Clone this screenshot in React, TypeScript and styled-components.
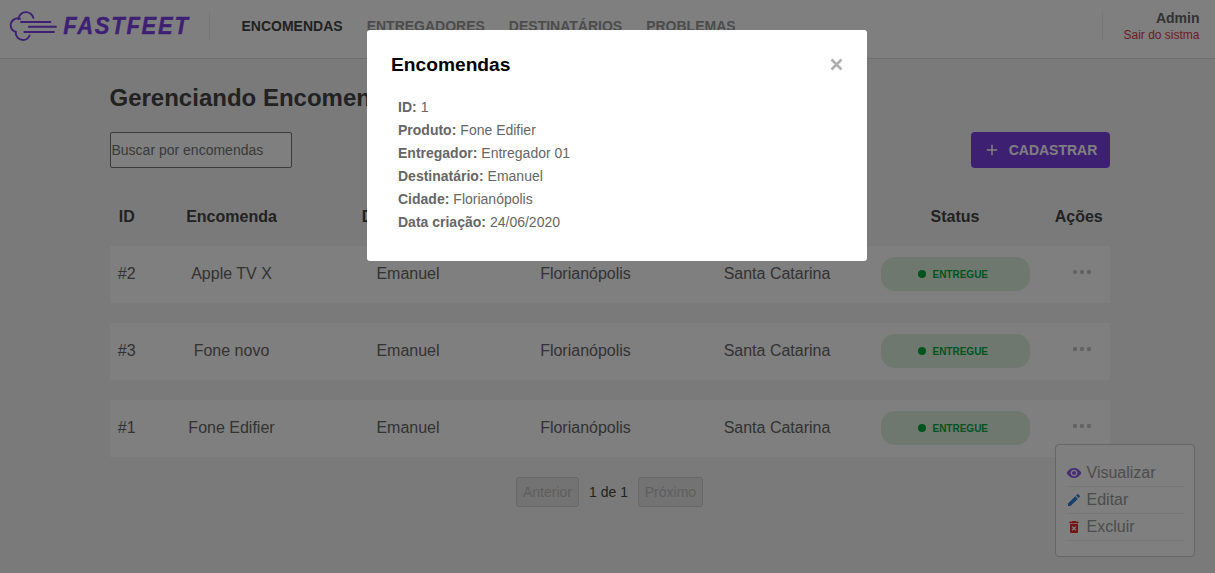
import React from 'react';
import styled, { createGlobalStyle } from 'styled-components';
import { MdAdd, MdVisibility, MdEdit, MdDeleteForever } from 'react-icons/md';

const GlobalStyle = createGlobalStyle`
  * { box-sizing: border-box; margin: 0; padding: 0; }
  html, body, #root { height: 100%; }
  body { background: #f5f5f5; overflow: hidden; }
  body, input, button { font-family: 'Liberation Sans', Arial, sans-serif; font-size: 14px; }
`;

const Page = styled.div`
  height: 573px;
  background: #f5f5f5;
`;

const Header = styled.header`
  height: 59px;
  display: flex;
  align-items: flex-start;
  background: #fff;
  border-bottom: 1px solid #ddd;
  padding: 11px 15.5px 0 9px;
`;

const LogoArea = styled.div`
  width: 201px;
  height: 30px;
  display: flex;
  border-right: 1px solid #eee;
`;

const Nav = styled.nav`
  display: flex;
  gap: 24px;
  height: 30px;
  padding-left: 31.5px;
  align-items: center;
  flex: 1;
`;

const NavLink = styled.a<{ $active?: boolean }>`
  font-size: 14px;
  font-weight: bold;
  line-height: 16px;
  text-transform: uppercase;
  color: ${(p) => (p.$active ? '#444' : '#999')};
`;

const Profile = styled.div`
  height: 30px;
  padding-left: 20px;
  border-left: 1px solid #eee;
  display: flex;
  flex-direction: column;
  align-items: flex-end;
`;

const UserName = styled.strong`
  font-size: 14px;
  line-height: 16px;
  margin-top: -1px;
  color: #666;
`;

const SignOut = styled.a`
  font-size: 12px;
  line-height: 14px;
  margin-top: 2px;
  color: #de3b3b;
`;

const Main = styled.main`
  width: 1000px;
  margin-left: 109.5px;
`;

const Title = styled.h1`
  padding-top: 25px;
  font-size: 24px;
  line-height: 28px;
  color: #444;
`;

const Toolbar = styled.div`
  display: flex;
  justify-content: space-between;
  margin-top: 20px;
`;

const Search = styled.input`
  width: 182px;
  height: 36px;
  border: 1px solid #767676;
  border-radius: 2px;
  padding: 1px;
  background: #fff;
  &::placeholder { color: #757575; }
`;

const AddButton = styled.button`
  width: 139px;
  height: 36px;
  display: flex;
  align-items: center;
  justify-content: center;
  gap: 8px;
  border: 0;
  border-radius: 4px;
  background: #7d40e7;
  color: #fff;
  font-weight: bold;
`;

const columns = '34.5px 175px 178px 177px 206px 150px 79.5px';

const HeadRow = styled.div`
  display: grid;
  grid-template-columns: ${columns};
  align-items: center;
  height: 18px;
  margin: 40px 0 20px;
  text-align: center;
  font-size: 16px;
  font-weight: bold;
  color: #444;
`;

const Row = styled.div`
  display: grid;
  grid-template-columns: ${columns};
  align-items: center;
  height: 57px;
  margin-bottom: 20px;
  padding-bottom: 2px;
  text-align: center;
  font-size: 16px;
  color: #666;
  background: #fff;
`;

const ActionsHead = styled.span`
  padding-left: 18px;
`;

const Status = styled.div`
  width: 149px;
  height: 34px;
  margin: 1px auto 0;
  border-radius: 14px;
  display: flex;
  align-items: center;
  justify-content: center;
  gap: 6px;
  padding-right: 4px;
  background: #dff0df;
  color: #00aa3c;
  font-size: 10px;
  font-weight: bold;
`;

const Dot = styled.i`
  width: 8.5px;
  height: 8.5px;
  border-radius: 50%;
  background: currentColor;
`;

const Actions = styled.div`
  display: flex;
  justify-content: center;
  padding-left: 24px;
  padding-bottom: 4px;
  color: #c6c6c6;
`;

const Pagination = styled.div`
  display: flex;
  align-items: center;
  margin-left: 406.5px;
  gap: 10px;
  font-size: 14px;
  color: #444;
`;

const PageButton = styled.button<{ $width: number }>`
  width: ${(p) => p.$width}px;
  height: 30px;
  border: 1px solid #cecece;
  border-radius: 3px;
  background: #e6e6e6;
  color: #bdbdbd;
`;

const Menu = styled.div`
  position: absolute;
  left: 1055px;
  top: 444px;
  width: 140px;
  height: 113px;
  padding: 15px 10px;
  background: #fff;
  border: 1px solid #ccc;
  border-radius: 4px;
`;

const MenuItem = styled.div<{ $icon: string }>`
  display: flex;
  align-items: center;
  gap: 4.5px;
  height: 27px;
  border-bottom: 1px solid #eee;
  font-size: 16px;
  color: #999;
  svg { color: ${(p) => p.$icon}; }
`;

const Overlay = styled.div`
  position: fixed;
  inset: 0;
  background: rgba(0, 0, 0, 0.5);
  display: flex;
  align-items: flex-start;
  padding: 30px 0 0 367px;
`;

const Dialog = styled.section`
  width: 500px;
  height: 231px;
  padding: 24px;
  border-radius: 3px;
  background: #fff;
`;

const DialogHeader = styled.div`
  display: flex;
  justify-content: space-between;
  align-items: flex-start;
  height: 22px;
`;

const DialogTitle = styled.h2`
  font-size: 19.2px;
  line-height: 22px;
  color: #000;
`;

const CloseIcon = styled.svg`
  margin-top: 4px;
  stroke: #b0b0b0;
  stroke-width: 2.7;
`;

const Details = styled.dl`
  padding: 20px 7px 0;
`;

const Detail = styled.div`
  display: flex;
  gap: 4px;
  height: 23px;
  line-height: 23px;
  font-size: 14px;
  color: #666;
  dt { font-weight: bold; }
`;

const Logo = () => (
  <svg width="184" height="32" viewBox="0 0 184 32">
    <g fill="none" stroke="#7d40e7" strokeWidth="1.9" strokeLinecap="round">
      <path d="M24.3 6.9A7.5 7.5 0 0 0 9.5 8.2" />
      <path d="M11 7.7A7 7 0 0 0 1.7 14.3A7 7 0 0 0 6.8 20.9" />
      <path d="M6.7 21A7.3 7.3 0 0 0 13.9 29A7.3 7.3 0 0 0 20.6 24.5" />
      <path d="M12 11h29.500M19.800 15.800H47M15.300 21H45" />
    </g>
    <text
      transform="translate(54.2 23) scale(.93 1)"
      textLength="134"
      fill="#7d40e7"
      stroke="#7d40e7"
      strokeWidth=".4"
      fontFamily="Liberation Sans"
      fontSize="23.6"
      fontWeight="bold"
      fontStyle="italic"
    >
      FASTFEET
    </text>
  </svg>
);

const MoreIcon = () => (
  <svg width="20" height="6" viewBox="0 0 20 6" fill="currentColor">
    <circle cx="3" cy="3" r="2.2" />
    <circle cx="10" cy="3" r="2.2" />
    <circle cx="17" cy="3" r="2.2" />
  </svg>
);

const orders = [
  { id: 2, product: 'Apple TV X' },
  { id: 3, product: 'Fone novo' },
  { id: 1, product: 'Fone Edifier' },
];

const details = [
  ['ID:', '1'],
  ['Produto:', 'Fone Edifier'],
  ['Entregador:', 'Entregador 01'],
  ['Destinatário:', 'Emanuel'],
  ['Cidade:', 'Florianópolis'],
  ['Data criação:', '24/06/2020'],
];

export default function App() {
  return (
    <Page>
      <GlobalStyle />
      <Header>
        <LogoArea><Logo /></LogoArea>
        <Nav>
          <NavLink $active>Encomendas</NavLink>
          <NavLink>Entregadores</NavLink>
          <NavLink>Destinatários</NavLink>
          <NavLink>Problemas</NavLink>
        </Nav>
        <Profile>
          <UserName>Admin</UserName>
          <SignOut>Sair do sistma</SignOut>
        </Profile>
      </Header>
      <Main>
        <Title>Gerenciando Encomendas</Title>
        <Toolbar>
          <Search placeholder="Buscar por encomendas" />
          <AddButton><MdAdd size={18} />CADASTRAR</AddButton>
        </Toolbar>
        <HeadRow>
          <span>ID</span>
          <span>Encomenda</span>
          <span>Destinatário</span>
          <span>Cidade</span>
          <span>Estado</span>
          <span>Status</span>
          <ActionsHead>Ações</ActionsHead>
        </HeadRow>
        {orders.map((o) => (
          <Row key={o.id}>
            <span>#{o.id}</span>
            <span>{o.product}</span>
            <span>Emanuel</span>
            <span>Florianópolis</span>
            <span>Santa Catarina</span>
            <Status><Dot />ENTREGUE</Status>
            <Actions><MoreIcon /></Actions>
          </Row>
        ))}
        <Pagination>
          <PageButton $width={63} disabled>Anterior</PageButton>
          <span>1 de 1</span>
          <PageButton $width={65} disabled>Próximo</PageButton>
        </Pagination>
      </Main>
      <Menu>
        <MenuItem $icon="#8e5be8"><MdVisibility size={16} />Visualizar</MenuItem>
        <MenuItem $icon="#2d7fd8"><MdEdit size={16} />Editar</MenuItem>
        <MenuItem $icon="#e62a2a"><MdDeleteForever size={16} />Excluir</MenuItem>
      </Menu>
      <Overlay>
        <Dialog>
          <DialogHeader>
            <DialogTitle>Encomendas</DialogTitle>
            <CloseIcon width="13" height="13" viewBox="0 0 13 13">
              <path d="M1.5 1.5l10 10M11.5 1.5l-10 10" />
            </CloseIcon>
          </DialogHeader>
          <Details>
            {details.map(([label, value]) => (
              <Detail key={label}><dt>{label}</dt><dd>{value}</dd></Detail>
            ))}
          </Details>
        </Dialog>
      </Overlay>
    </Page>
  );
}
